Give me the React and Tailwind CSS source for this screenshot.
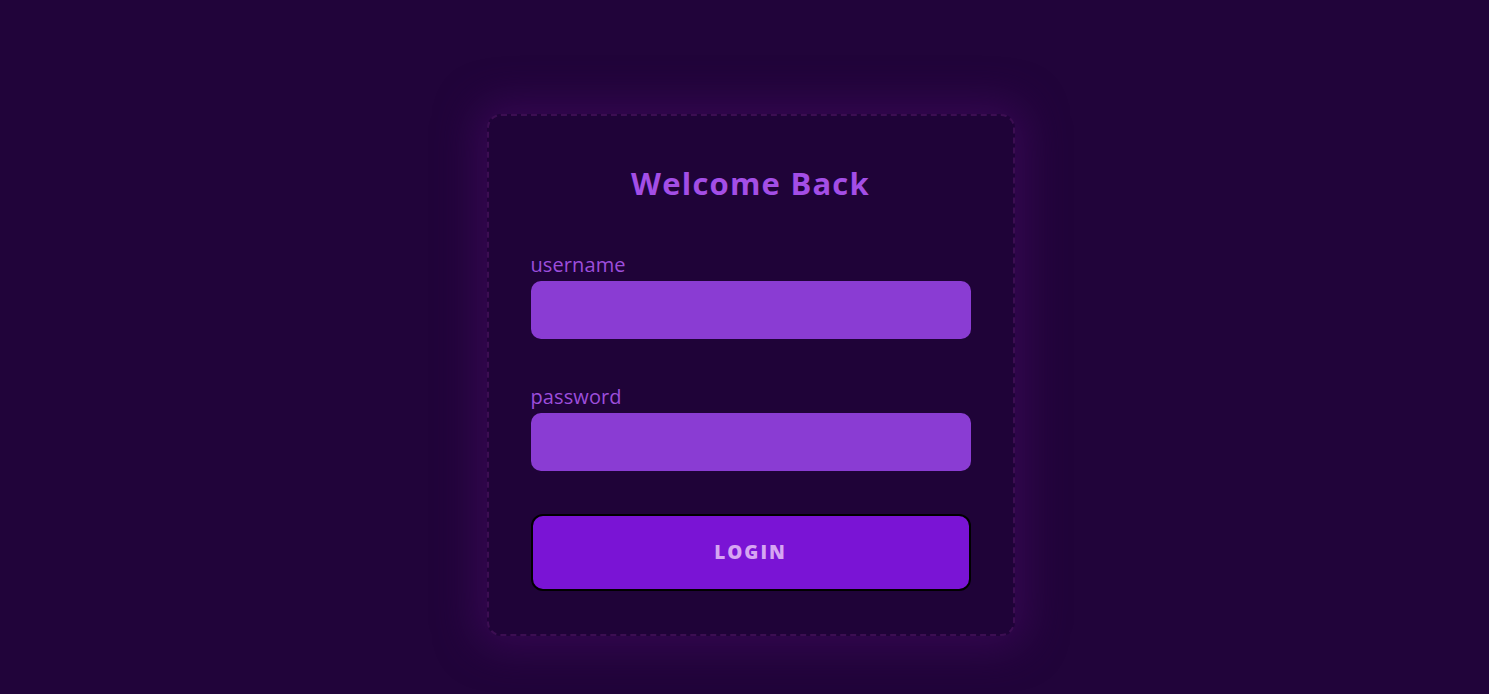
export default function App() {
  return (
    <div className="min-h-[694px] w-full bg-[#21043a] flex justify-center pl-3 pt-[114px]" style={{ fontFamily: '"Open Sans", sans-serif' }}>
      <div className="w-[528px] h-[522px] rounded-[14px] border-2 border-dashed border-[#3c0e52] bg-[#1f0338] shadow-[0_0_40px_10px_rgba(60,8,90,0.75)] px-[42px] pt-[47px] pb-[42px] flex flex-col">
        <h1 className="text-center text-[31px] leading-[40px] font-bold text-[#a34ee6] tracking-[1.2px]">Welcome Back</h1>
        <div className="mt-[50px] flex flex-col">
          <label className="text-[20px] leading-[24px] font-normal text-[#9d4edc] tracking-[0.1px]">username</label>
          <input className="mt-[4px] h-[58px] rounded-[10px] bg-[#8a3cd3] outline-none px-4 text-white" />
        </div>
        <div className="mt-[46px] flex flex-col">
          <label className="text-[20px] leading-[24px] font-normal text-[#9d4edc] tracking-[0.1px]">password</label>
          <input type="password" className="mt-[4px] h-[58px] rounded-[10px] bg-[#8a3cd3] outline-none px-4 text-white" />
        </div>
        <button className="mt-[43px] h-[77px] rounded-[12px] border-2 border-black bg-[#7a14d5] text-[#d6a6f2] font-extrabold text-[19px] tracking-[2px]">LOGIN</button>
      </div>
    </div>
  );
}
